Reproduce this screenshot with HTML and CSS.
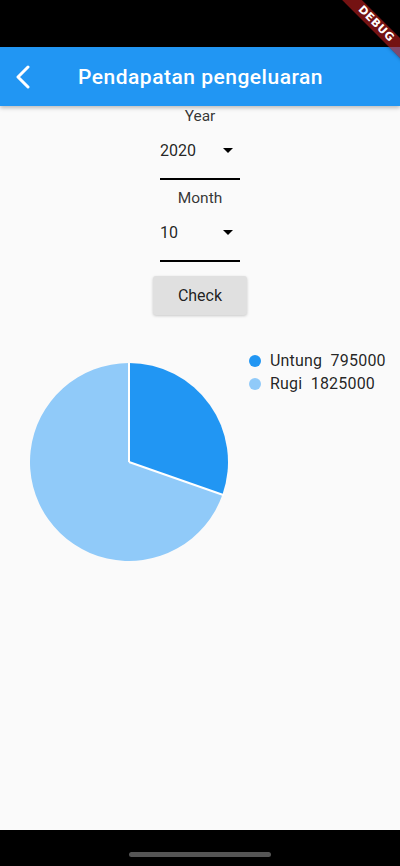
FILE: index.html
```html
<!DOCTYPE html>
<html>
<head>
<meta charset="utf-8">
<link rel="stylesheet" href="styles.css">
</head>
<body>
<div class="screen">
  <div class="status-bar"></div>
  <header class="app-bar">
    <svg class="back" width="16" height="24" viewBox="0 0 16 24"><path d="M13 2 L3 12 L13 22" fill="none" stroke="#fff" stroke-width="3" stroke-linecap="round" stroke-linejoin="round"/></svg>
    <h1 class="title">Pendapatan pengeluaran</h1>
  </header>
  <main class="content">
    <div class="label">Year</div>
    <div class="dropdown">
      <span class="value">2020</span>
      <span class="caret"></span>
    </div>
    <div class="label label-gap">Month</div>
    <div class="dropdown">
      <span class="value">10</span>
      <span class="caret"></span>
    </div>
    <button class="check">Check</button>
    <div class="chart-row">
      <svg class="pie" width="198" height="198" viewBox="0 0 198 198">
        <path d="M99 99 L99 0 A99 99 0 0 1 192.49 131.56 Z" fill="#2196F3"/>
        <path d="M99 99 L192.49 131.56 A99 99 0 1 1 99 0 Z" fill="#90CAF9"/>
        <line x1="99" y1="99" x2="99" y2="0" stroke="#fff" stroke-width="2"/>
        <line x1="99" y1="99" x2="194" y2="132.2" stroke="#fff" stroke-width="2"/>
      </svg>
      <ul class="legend">
        <li><span class="dot dot-dark"></span>Untung&nbsp; 795000</li>
        <li><span class="dot dot-light"></span>Rugi&nbsp; 1825000</li>
      </ul>
    </div>
  </main>
  <div class="nav-bar"><span class="handle"></span></div>
  <div class="banner">DEBUG</div>
</div>
</body>
</html>
```
FILE: styles.css
```css
* { box-sizing: border-box; }
html, body { margin: 0; padding: 0; }
body {
  font-family: Roboto, "Noto Sans", sans-serif;
  background: #000;
}
.screen {
  position: relative;
  width: 400px;
  height: 866px;
  display: flex;
  flex-direction: column;
  overflow: hidden;
  background: #fafafa;
}
.status-bar {
  height: 47px;
  background: #000;
  flex: none;
}
.app-bar {
  height: 59px;
  flex: none;
  background: #2196F3;
  display: flex;
  align-items: center;
  padding-left: 15px;
  box-shadow: 0 2px 4px rgba(0,0,0,0.25);
  position: relative;
  z-index: 1;
}
.back { flex: none; display: block; }
.title {
  margin: 0 0 0 47px;
  font-size: 21px;
  font-weight: 500;
  color: #fff;
  letter-spacing: 0.5px;
  white-space: nowrap;
}
.content {
  flex: 1;
  display: flex;
  flex-direction: column;
  align-items: center;
}
.label {
  height: 18px;
  line-height: 18px;
  margin-top: 1px;
  font-size: 15.5px;
  color: rgba(0,0,0,0.8);
}
.label-gap { margin-top: 9px; }
.dropdown {
  width: 80px;
  height: 55px;
  border-bottom: 2px solid #000;
  display: flex;
  align-items: center;
  justify-content: space-between;
  padding-bottom: 3px;
}
.value {
  font-size: 16px;
  color: rgba(0,0,0,0.87);
}
.caret {
  width: 0;
  height: 0;
  margin-right: 7px;
  border-left: 5px solid transparent;
  border-right: 5px solid transparent;
  border-top: 5px solid #000;
}
.check {
  margin-top: 14px;
  width: 94px;
  height: 39px;
  border: none;
  border-radius: 3px;
  background: #e0e0e0;
  font-family: Roboto, "Noto Sans", sans-serif;
  font-size: 16px;
  color: rgba(0,0,0,0.87);
  box-shadow: 0 1px 3px rgba(0,0,0,0.2);
  padding: 0;
}
.chart-row {
  align-self: stretch;
  display: flex;
  margin-top: 35px;
}
.pie {
  display: block;
  margin: 13px 0 0 30px;
  flex: none;
}
.legend {
  list-style: none;
  margin: -1px 0 0 20px;
  padding: 0;
}
.legend li {
  display: flex;
  align-items: center;
  height: 23px;
  font-size: 16px;
  letter-spacing: 0.2px;
  color: rgba(0,0,0,0.87);
}
.dot {
  width: 12px;
  height: 12px;
  border-radius: 50%;
  margin: 0 9px 0 1px;
}
.dot-dark { background: #2196F3; }
.dot-light { background: #90CAF9; }
.nav-bar {
  height: 36px;
  flex: none;
  background: #000;
  display: flex;
  justify-content: center;
  padding-top: 22px;
}
.handle {
  width: 142px;
  height: 5px;
  border-radius: 3px;
  background: #555;
}
.banner {
  position: absolute;
  left: 326px;
  top: 17px;
  width: 100px;
  height: 14px;
  line-height: 14px;
  background: rgba(183,28,28,0.63);
  color: #fff;
  font-family: "DejaVu Sans", sans-serif;
  font-size: 11px;
  font-weight: 900;
  text-align: center;
  letter-spacing: 0.5px;
  transform: rotate(45deg);
  box-shadow: 0 0 4px rgba(0,0,0,0.4);
  z-index: 2;
}
```
